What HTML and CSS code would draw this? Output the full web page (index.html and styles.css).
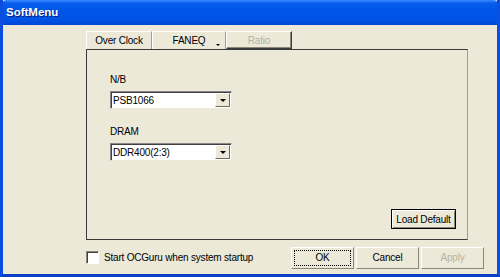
FILE: index.html
```html
<!DOCTYPE html>
<html lang="en">
<head>
<meta charset="UTF-8">
<title>SoftMenu</title>
<link rel="stylesheet" href="styles.css">
</head>
<body>

<div class="window">
    <div class="titlebar">SoftMenu</div>

    <div class="content">
        <div class="tabs">
            <div class="tab">Over Clock</div>
            <div class="tab tab-drop">FANEQ <span class="drop-mark"></span></div>
            <div class="tab tab-disabled">Ratio</div>
        </div>

        <div class="panel">
            <div class="field">
                <label>N/B</label>
                <div class="combo">
                    <span class="combo-text">PSB1066</span>
                    <span class="combo-btn"><span class="arrow"></span></span>
                </div>
            </div>
            <div class="field">
                <label>DRAM</label>
                <div class="combo">
                    <span class="combo-text">DDR400(2:3)</span>
                    <span class="combo-btn"><span class="arrow"></span></span>
                </div>
            </div>
            <div class="panel-foot">
                <button class="btn btn-default">Load Default</button>
            </div>
        </div>

        <div class="footer">
            <label class="check">
                <span class="box"></span>
                Start OCGuru when system startup
            </label>
            <div class="actions">
                <button class="btn btn-ok"><span class="focus">OK</span></button>
                <button class="btn">Cancel</button>
                <button class="btn" disabled>Apply</button>
            </div>
        </div>
    </div>
</div>

</body>
</html>
```

FILE: styles.css
```css
body {
    margin: 0;
    padding: 0;
    font-family: Tahoma, "Liberation Sans", Arial, sans-serif;
    font-size: 10px;
    letter-spacing: -0.2px;
    color: #000;
}
.window {
    width: 500px;
    height: 277px;
    box-sizing: border-box;
    background-color: #ece9d8;
    border-left: 3px solid #0b4ee0;
    border-right: 3px solid #0b4ee0;
    border-bottom: 3px solid #0a3fc8;
    display: flex;
    flex-direction: column;
    overflow: hidden;
}
.titlebar {
    height: 25px;
    margin: 0 -3px;
    padding-left: 6px;
    line-height: 25px;
    color: white;
    font-weight: bold;
    font-size: 11.5px;
    letter-spacing: 0;
    text-shadow: 1px 1px 0 #0a1a80;
    border-radius: 7px 7px 0 0;
    background: linear-gradient(to bottom, #3a8cff 0%, #0a5eee 12%, #0055e8 40%, #0053e4 80%, #0046d6 100%);
}
.content {
    flex: 1;
    padding: 6px 13px 0 83px;
    display: flex;
    flex-direction: column;
}
.tabs {
    display: flex;
    height: 18px;
}
.tab {
    width: 66px;
    box-sizing: border-box;
    text-align: center;
    line-height: 17px;
    border-left: 1px solid #fff;
    border-right: 1px solid #a09d8c;
    border-top: 1px solid #fff;
}
.tab-drop {
    width: 74px;
    position: relative;
}
.drop-mark {
    position: absolute;
    right: 5px;
    bottom: 3px;
    border-left: 2px solid transparent;
    border-right: 2px solid transparent;
    border-top: 2px solid #000;
}
.tab-disabled {
    color: #b5b2a5;
    border: 1px solid #3c3c3c;
    border-top-color: #fff;
    border-left-color: #fff;
    box-shadow: inset -1px -1px 0 #8a8778;
}
.panel {
    width: 382px;
    height: 191px;
    box-sizing: border-box;
    border: 1px solid #3a3a3a;
    border-right-color: #a09d8c;
    padding: 22px 11px 10px 23px;
    display: flex;
    flex-direction: column;
}
.field {
    margin-bottom: 15px;
}
.field label {
    display: block;
    height: 16px;
    line-height: 16px;
    margin-bottom: 3px;
}
.combo {
    width: 122px;
    height: 18px;
    box-sizing: border-box;
    background-color: white;
    border: 1px solid #888;
    border-right-color: #ece9d8;
    border-bottom-color: #ece9d8;
    box-shadow: inset 1px 1px 0 #404040;
    display: flex;
    align-items: center;
}
.combo-text {
    flex: 1;
    padding-left: 2px;
}
.combo-btn {
    width: 15px;
    height: 14px;
    margin-right: 1px;
    box-sizing: border-box;
    background-color: #ece9d8;
    border: 1px solid #fff;
    border-right-color: #6f6d63;
    border-bottom-color: #6f6d63;
    display: flex;
    align-items: center;
    justify-content: center;
}
.arrow {
    border-left: 3px solid transparent;
    border-right: 3px solid transparent;
    border-top: 3px solid #000;
}
.panel-foot {
    margin-top: auto;
    display: flex;
    justify-content: flex-end;
}
.btn {
    font-family: inherit;
    font-size: 10px;
    letter-spacing: -0.2px;
    width: 63px;
    height: 22px;
    padding: 0;
    background-color: #ece9d8;
    border: 1px solid #fff;
    border-right-color: #8a8778;
    border-bottom-color: #8a8778;
    color: #000;
}
.btn:disabled {
    color: #b5b2a5;
}
.btn-default {
    width: 65px;
    height: 20px;
    border: 1px solid #000;
    box-shadow: inset 1px 1px 0 #fff, inset -1px -1px 0 #8a8778;
}
.footer {
    display: flex;
    align-items: center;
    height: 35px;
}
.check {
    display: flex;
    align-items: center;
    gap: 5px;
    flex: 1;
}
.box {
    width: 11px;
    height: 11px;
    background-color: white;
    border: 1px solid #8a8778;
    border-right-color: #fff;
    border-bottom-color: #fff;
    box-shadow: inset 1px 1px 0 #404040;
}
.actions {
    display: flex;
    gap: 2px;
}
.btn-ok .focus {
    display: inline-block;
    width: 55px;
    line-height: 14px;
    border: 1px dotted #000;
}
```
